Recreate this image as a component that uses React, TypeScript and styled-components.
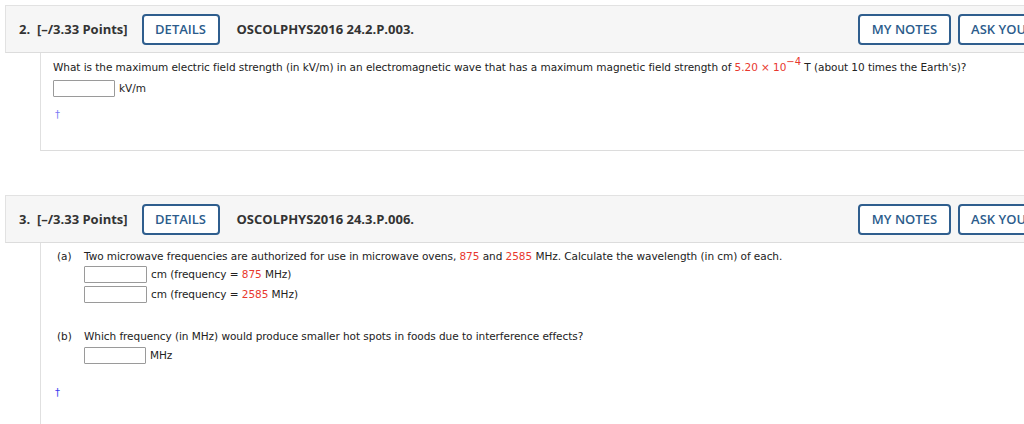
import { createGlobalStyle, styled } from 'styled-components';

const GlobalStyle = createGlobalStyle`
  html, body {
    margin: 0;
    padding: 0;
    background: #ffffff;
  }
  body {
    overflow: hidden;
    font-family: "DejaVu Sans", Verdana, sans-serif;
    color: #222;
  }
`;

const RED = '#e8382e';

const Question = ({
  number,
  code,
  children,
  height,
}: {
  number: number;
  code: string;
  children: React.ReactNode;
  height: number;
}) => (
  <Block>
    <Header>
      <Points>
        {number}.&nbsp; [–/3.33 Points]
      </Points>
      <OutlineButton>DETAILS</OutlineButton>
      <Code>{code}</Code>
      <Actions>
        <OutlineButton>MY NOTES</OutlineButton>
        <OutlineButton>ASK YOUR TEACHER</OutlineButton>
      </Actions>
    </Header>
    <Body $height={height}>{children}</Body>
  </Block>
);

const App = () => (
  <>
    <GlobalStyle />
    <Page>
      <Question number={2} code="OSCOLPHYS2016 24.2.P.003." height={98}>
        <Text>
          What is the maximum electric field strength (in kV/m) in an electromagnetic wave that has a
          maximum magnetic field strength of{' '}
          <Red>
            5.20 × 10<Sup>−4</Sup>
          </Red>{' '}
          T (about 10 times the Earth's)?
        </Text>
        <AnswerRow $top={4}>
          <Field $width={62} />
          <Unit>kV/m</Unit>
        </AnswerRow>
        <Dagger $color="#7b7bf5" $top={11}>
          †
        </Dagger>
      </Question>

      <Question number={3} code="OSCOLPHYS2016 24.3.P.006." height={200}>
        <Part $gap={-1}>
          <PartLabel>(a)</PartLabel>
          <PartContent>
            <Text>
              Two microwave frequencies are authorized for use in microwave ovens, <Red>875</Red> and{' '}
              <Red>2585</Red> MHz. Calculate the wavelength (in cm) of each.
            </Text>
            <AnswerRow $top={1}>
              <Field $width={63} />
              <Unit>
                cm (frequency = <Red>875</Red> MHz)
              </Unit>
            </AnswerRow>
            <AnswerRow>
              <Field $width={63} />
              <Unit>
                cm (frequency = <Red>2585</Red> MHz)
              </Unit>
            </AnswerRow>
          </PartContent>
        </Part>
        <Part $gap={25}>
          <PartLabel>(b)</PartLabel>
          <PartContent>
            <Text>Which frequency (in MHz) would produce smaller hot spots in foods due to interference effects?</Text>
            <AnswerRow $top={2}>
              <Field $width={62} />
              <Unit>MHz</Unit>
            </AnswerRow>
          </PartContent>
        </Part>
        <Dagger $color="#3b3bf0" $top={22}>
          †
        </Dagger>
      </Question>
    </Page>
  </>
);

export default App;

const Page = styled.main`
  width: 1116px;
  padding: 5px 0 0 5px;
`;

const Block = styled.section`
  margin-bottom: 44px;
`;

const Header = styled.header`
  display: flex;
  align-items: center;
  gap: 17px;
  height: 46px;
  padding: 0 13px;
  background: #f6f6f6;
  border-top: 1px solid #e2e2e2;
  border-bottom: 1px solid #dcdcdc;
  border-left: 1px solid #e2e2e2;
  font-family: "Open Sans", "Noto Sans", sans-serif;
  font-size: 13px;
  font-weight: 700;
  color: #333;
`;

const Points = styled.span`
  margin-right: -3px;
  white-space: nowrap;
`;

const Code = styled.span`
  white-space: nowrap;
`;

const Actions = styled.div`
  display: flex;
  gap: 7px;
  margin-left: auto;
`;

const OutlineButton = styled.button`
  height: 31px;
  padding: 0 11.5px;
  border: 2px solid #2f5e8e;
  border-radius: 4px;
  background: #ffffff;
  font-family: "Open Sans", "Noto Sans", sans-serif;
  font-size: 13px;
  font-weight: 600;
  color: #2c5c8c;
  white-space: nowrap;
`;

const Body = styled.div<{ $height: number }>`
  display: flex;
  flex-direction: column;
  height: ${({ $height }) => $height}px;
  box-sizing: border-box;
  margin-left: 35px;
  padding: 7px 12px 0;
  border-left: 1px solid #e0e0e0;
  border-bottom: 1px solid #dcdcdc;
  font-size: 10.5px;
  letter-spacing: -0.05px;
`;

const Text = styled.div`
  line-height: 14px;
  white-space: nowrap;
`;

const Red = styled.span`
  color: ${RED};
`;

const Sup = styled.sup`
  font-size: 10px;
  vertical-align: 6px;
  line-height: 0;
`;

const AnswerRow = styled.div<{ $top?: number }>`
  display: flex;
  align-items: center;
  gap: 4px;
  height: 20px;
  margin-top: ${({ $top }) => $top ?? 0}px;
`;

const Field = styled.input<{ $width: number }>`
  box-sizing: border-box;
  width: ${({ $width }) => $width}px;
  height: 17px;
  margin: 0;
  padding: 0;
  border: 1px solid #9a9a9a;
  border-radius: 1px;
  background: #fff;
`;

const Unit = styled.span`
  line-height: 14px;
  white-space: nowrap;
`;

const Dagger = styled.span<{ $color: string; $top?: number }>`
  margin-top: ${({ $top }) => $top ?? 10}px;
  padding-left: 2px;
  font-size: 10px;
  color: ${({ $color }) => $color};
`;

const Part = styled.div<{ $gap?: number }>`
  display: flex;
  margin-top: ${({ $gap }) => $gap ?? 0}px;
`;

const PartLabel = styled.div`
  width: 27px;
  padding-left: 4px;
  line-height: 14px;
`;

const PartContent = styled.div`
  display: flex;
  flex-direction: column;
`;
